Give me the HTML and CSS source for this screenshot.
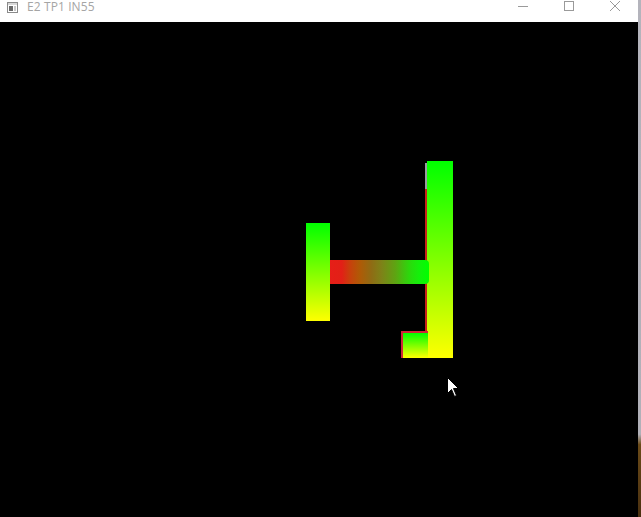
FILE: index.html
```html
<!DOCTYPE html>
<html>
<head>
<meta charset="utf-8">
<link rel="stylesheet" href="styles.css">
</head>
<body>
<div class="window">
  <div class="titlebar">
    <svg class="appicon" width="11" height="11" viewBox="0 0 11 11">
      <rect x="0.5" y="0.5" width="10" height="10" fill="#fff" stroke="#8a8a8a"/>
      <rect x="1" y="1" width="9" height="2" fill="#d8d8d8"/>
      <rect x="2" y="4" width="4" height="5" fill="#6a6a6a"/>
      <rect x="7" y="4" width="2" height="5" fill="#c8c8c8"/>
    </svg>
    <span class="title">E2 TP1 IN55</span>
    <div class="controls">
      <svg class="ctl" width="46" height="22" viewBox="0 0 46 22"><line x1="18" y1="6.5" x2="28" y2="6.5" stroke="#9a9a9a" stroke-width="1"/></svg>
      <svg class="ctl" width="46" height="22" viewBox="0 0 46 22"><rect x="18.5" y="1.5" width="9" height="9" fill="none" stroke="#9a9a9a" stroke-width="1"/></svg>
      <svg class="ctl" width="46" height="22" viewBox="0 0 46 22"><path d="M18 1 L28 11 M28 1 L18 11" stroke="#9a9a9a" stroke-width="1"/></svg>
    </div>
  </div>
  <div class="canvas">
    <div class="shape bar-left"></div>
    <div class="shape edge-gray"></div>
    <div class="shape edge-red"></div>
    <div class="shape bar-right"></div>
    <div class="shape bar-mid"></div>
    <div class="shape foot-outline"></div>
    <div class="shape foot"></div>
    <svg class="cursor" width="13" height="22" viewBox="0 0 13 22">
      <path d="M0.5 0.5 L0.5 16.5 L4.5 12.5 L7.5 19.5 L9.5 18.5 L6.5 11.5 L11.5 11.5 Z" fill="#fff" stroke="#000" stroke-width="1"/>
    </svg>
  </div>
  <div class="rightedge"></div>
</div>
</body>
</html>
```

FILE: styles.css
```css
html, body {
  margin: 0;
  padding: 0;
  background: #000;
  width: 641px;
  height: 517px;
  overflow: hidden;
}
.window {
  position: relative;
  width: 641px;
  height: 517px;
  display: flex;
  flex-direction: column;
}
.titlebar {
  height: 22px;
  background: #fff;
  display: flex;
  align-items: flex-start;
  padding-left: 7px;
  padding-right: 3px;
  box-sizing: border-box;
}
.appicon {
  display: block;
  margin-top: 2px;
}
.title {
  font-family: "Open Sans", "Noto Sans", sans-serif;
  font-size: 12px;
  line-height: 12px;
  color: #a5a5a5;
  margin-left: 9px;
  margin-top: 1px;
  letter-spacing: 0.1px;
  white-space: nowrap;
}
.controls {
  margin-left: auto;
  display: flex;
  margin-right: 0;
}
.ctl {
  display: block;
}
.canvas {
  flex: 1;
  position: relative;
  background: #000;
}
.shape {
  position: absolute;
}
/* canvas origin is y=22 */
.bar-left {
  left: 306px;
  top: 201px;
  width: 24px;
  height: 98px;
  background: linear-gradient(to bottom, #00ff00, #ffff00);
}
.bar-mid {
  left: 330px;
  top: 238px;
  width: 99px;
  height: 24px;
  border-radius: 0 4px 4px 0;
  background: linear-gradient(to right,
    #e61e18 0%, #e22016 12%, #c8400c 20%, #b05a06 30%,
    #8e6c14 42%, #7e8218 52%, #5ea412 66%, #2cd80c 80%, #14f00a 90%, #00ff00 100%);
}
.edge-gray {
  left: 425px;
  top: 141px;
  width: 2px;
  height: 26px;
  background: #9a9aa0;
}
.edge-red {
  left: 425px;
  top: 167px;
  width: 2px;
  height: 143px;
  background: #c82018;
}
.bar-right {
  left: 427px;
  top: 139px;
  width: 26px;
  height: 197px;
  background: linear-gradient(to bottom, #00ff00, #ffff00);
}
.foot-outline {
  left: 401px;
  top: 309px;
  width: 27px;
  height: 27px;
  background: #d02838;
}
.foot {
  left: 403px;
  top: 311px;
  width: 25px;
  height: 25px;
  background: linear-gradient(to bottom, #00ff00, #ffff00);
}
.cursor {
  position: absolute;
  left: 447px;
  top: 355px;
}
.rightedge {
  position: absolute;
  right: 0;
  top: 0;
  width: 3px;
  height: 517px;
  background: linear-gradient(to bottom, #b4b4bc 0%, #b0b0b8 84%, #6a4a18 86%, #4a3010 100%);
}
```
